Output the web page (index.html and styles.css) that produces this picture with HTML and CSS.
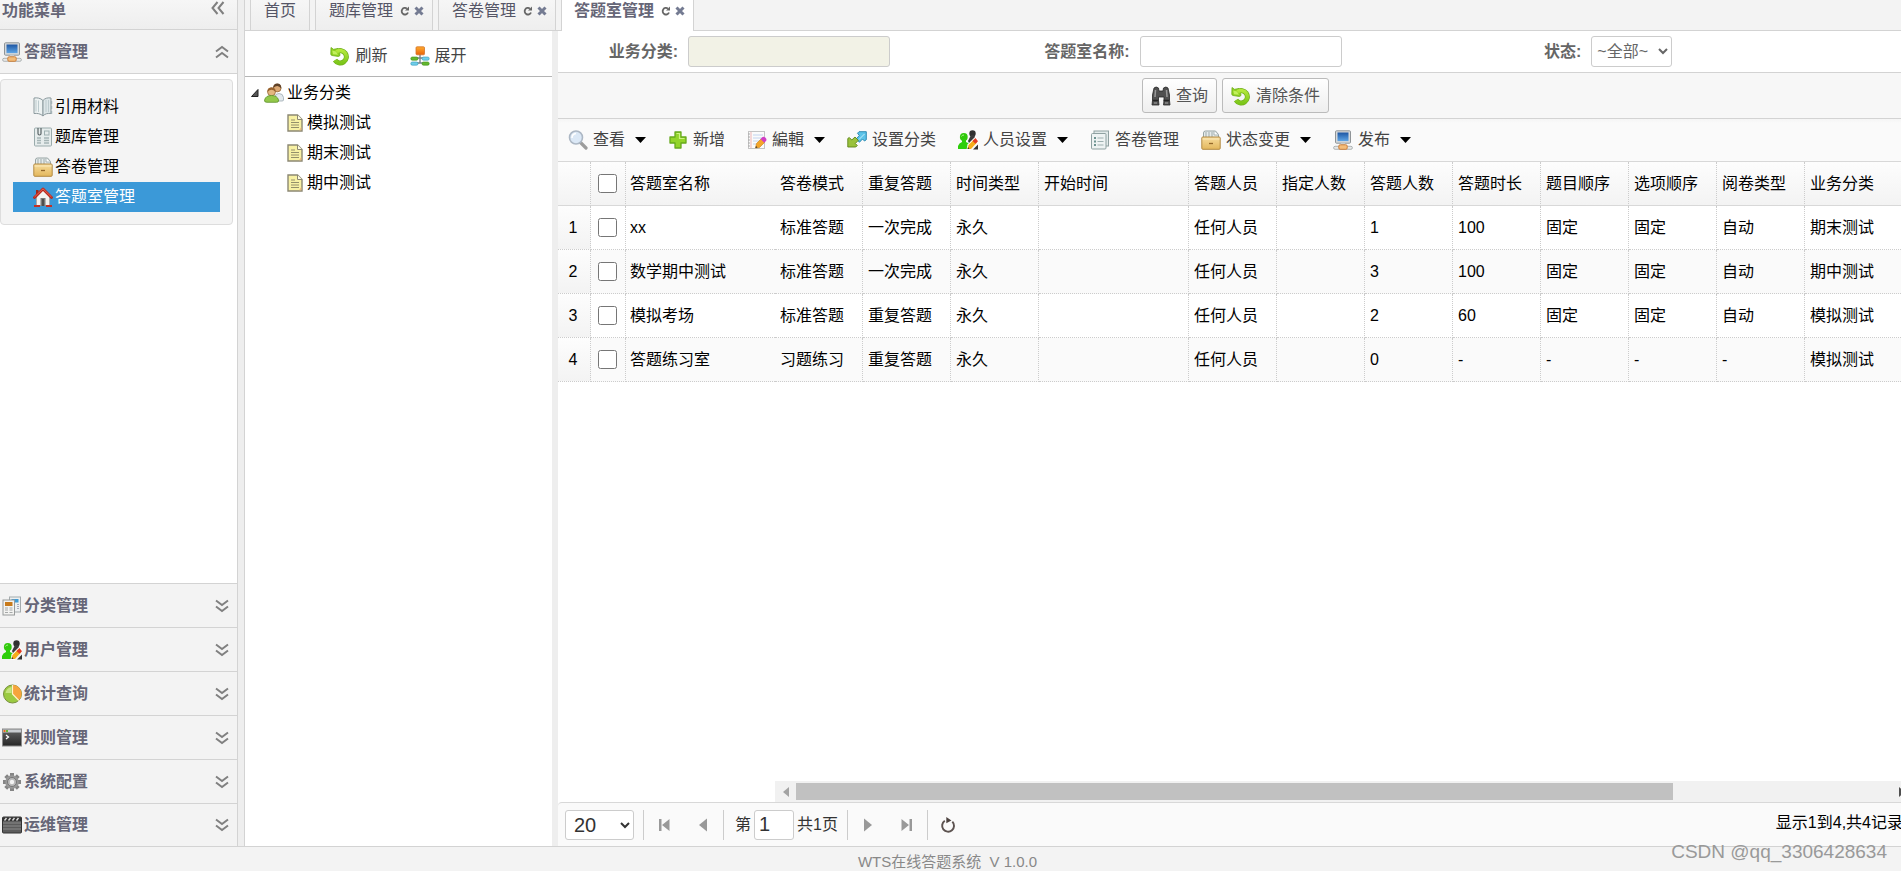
FILE: index.html
```html
<!DOCTYPE html>
<html lang="zh-CN">
<head>
<meta charset="utf-8">
<title>WTS在线答题系统</title>
<link rel="stylesheet" href="styles.css">
</head>
<body>
<svg class="defs" aria-hidden="true">
  <defs>
    <linearGradient id="g-screen" x1="0" y1="0" x2="0" y2="1"><stop offset="0" stop-color="#1d56a3"/><stop offset="1" stop-color="#5fa6e6"/></linearGradient>
    <linearGradient id="g-green" x1="0" y1="0" x2="0" y2="1"><stop offset="0" stop-color="#b4e83c"/><stop offset="1" stop-color="#7cc61a"/></linearGradient>
    <linearGradient id="g-drawer" x1="0" y1="0" x2="0" y2="1"><stop offset="0" stop-color="#f7dc9c"/><stop offset="1" stop-color="#e3b75c"/></linearGradient>
    <linearGradient id="g-orange" x1="0" y1="0" x2="0" y2="1"><stop offset="0" stop-color="#ffab2e"/><stop offset="1" stop-color="#e8620a"/></linearGradient>
    <linearGradient id="g-term" x1="0" y1="0" x2="0" y2="1"><stop offset="0" stop-color="#666"/><stop offset="1" stop-color="#262626"/></linearGradient>
    <symbol id="i-pc" viewBox="0 0 20 20">
      <rect x="2.5" y=".8" width="15" height="12.4" rx="1" fill="#d6d9db" stroke="#8f9497"/>
      <rect x="4.5" y="2.5" width="11" height="8.6" fill="url(#g-screen)"/>
      <path d="M8 13h4v4H8z" fill="#c9cccd"/>
      <rect x=".6" y="16.3" width="18.8" height="3" rx="1.5" fill="#e7e9e9" stroke="#9fa5a6" stroke-width=".8"/>
      <rect x="5.8" y="14.8" width="8.4" height="4.5" rx="1.3" fill="#f3bd7a" stroke="#c97a35" stroke-width=".9"/>
    </symbol>
    <symbol id="i-book" viewBox="0 0 20 20">
      <path d="M10 3.500C7.500 1 4 .5 1 1v15.500c3-.3 6.500 0 9 2.500z" fill="#edf2f2" stroke="#8b999d"/>
      <path d="M10 3.500C12 1 15 .5 18 1v15.500c-3-.3-6 0-8 2.500z" fill="#dde6e8" stroke="#8b999d"/>
      <path d="M3 3v11.500M5.500 3.500V15M13 3v12M15.500 3v12" stroke="#bccacd"/>
      <path d="M18.500 4v3M18.500 9v3M18.500 14v3" stroke="#a5b4b8" stroke-width="1.400"/>
    </symbol>
    <symbol id="i-bank" viewBox="0 0 20 20">
      <rect x="1.500" y="1" width="17" height="18" rx="1" fill="#e6ecec" stroke="#9aabac"/>
      <path d="M5 1v5.500q0 1.500 1.500 1.500T8 6.500V1" fill="none" stroke="#596365" stroke-width="1.200"/>
      <rect x="11.500" y="4" width="4.500" height="4" fill="none" stroke="#9eafb0"/>
      <path d="M4 11h4M4 13.500h4M4 16h4M11 11h5M11 13.500h5M11 16h5" stroke="#a5b4b5" stroke-width="1.300"/>
    </symbol>
    <symbol id="i-drawer" viewBox="0 0 20 20">
      <path d="M2.500 9V3q0-2 2-2h10l3 3.500V9z" fill="#e5ebeb" stroke="#97a4a4"/>
      <path d="M5 2v6M8 2v6M11 2v6" stroke="#9fabab"/>
      <path d="M13 1.500V5h4" fill="#fff" stroke="#97a4a4" stroke-width=".8"/>
      <rect x=".8" y="7" width="18.400" height="12.300" rx="1" fill="url(#g-drawer)" stroke="#b38a43"/>
      <path d="M1.500 9h17" stroke="#fbeabc"/>
      <path d="M8 13.500h4" stroke="#93682a" stroke-width="1.300"/>
    </symbol>
    <symbol id="i-home" viewBox="0 0 20 20">
      <path d="M3.500 9v9.500h13V9L10 3z" fill="#f3f3f0" stroke="#aaa"/>
      <path d="M3 3h2.500v4H3z" fill="#9d2a1d"/>
      <path d="M1.500 10.500L10 2l8.500 8.500" fill="none" stroke="#b8271a" stroke-width="2.800" stroke-linecap="round" stroke-linejoin="round"/>
      <path d="M1.500 10L10 1.800l8.500 8.200" fill="none" stroke="#e8695a" stroke-width="1"/>
      <path d="M7.500 11h5v8h-5z" fill="#7a7a78"/><path d="M9 12h2v7H9z" fill="#4f4f4d"/>
      <path d="M1 19h6M13 19h6" stroke="#c43023" stroke-width="2"/>
    </symbol>
    <symbol id="i-news" viewBox="0 0 20 20">
      <rect x="7.500" y="1" width="11" height="15" fill="#edf0f1" stroke="#a4abad"/>
      <rect x="9.500" y="3" width="7" height="3.500" fill="#3f9bd6"/>
      <path d="M15 8.500h2M15 10.500h2M15 12.500h2" stroke="#aab"/>
      <rect x="1" y="4" width="11.500" height="15" fill="#f3f3f1" stroke="#989b9b"/>
      <rect x="3" y="6" width="7.500" height="4" fill="#c87a1b"/>
      <path d="M3 12h3M7.500 12h3M3 14h3M7.500 14h3M3 16.500h3M7.500 16.500h3" stroke="#a5a8a8"/>
    </symbol>
    <symbol id="i-users" viewBox="0 0 20 20">
      <circle cx="14.500" cy="3.500" r="3.200" fill="#303030"/>
      <path d="M13 5h3l2 4-6 6-2-4z" fill="#3a3a3a"/>
      <circle cx="5.800" cy="7" r="3.900" fill="#30c90b"/>
      <path d="M0 19v-3q1-3 4-4V9h4v3q3 1 4 3l-2 4z" fill="#2fce0c"/>
      <path d="M3.500 6.500q.5-1.500 2.500-1.500" stroke="#a8f28c" fill="none"/>
      <path d="M8.500 20l1-5.500L17.500 6.500l3.500 4L12.500 20z" fill="#fff"/>
      <path d="M9.500 19l1-4 5.500-5.500 3 3L13 19z" fill="#f6ad1b"/>
      <path d="M14.500 11L17.500 8l2.500 3.200-2.500 2.500z" fill="#e33b26"/>
      <path d="M9.500 19l.5-2 1.500 1.800z" fill="#333"/>
      <path d="M15 19.500l5-5v5z" fill="#333"/>
    </symbol>
    <symbol id="i-pie" viewBox="0 0 20 20">
      <circle cx="10.500" cy="10" r="9" fill="#9bca42" stroke="#788f3d"/>
      <path d="M10.500 10V1A9 9 0 0 1 16.800 16.500z" fill="#f6a43c"/>
      <path d="M10.500 1v9l6.300 6.500" stroke="#fff3c7" fill="none" stroke-width="1.200"/>
      <path d="M3.500 9q1-5 6-6v6z" fill="#d0e88e" opacity=".8"/>
    </symbol>
    <symbol id="i-term" viewBox="0 0 20 20">
      <rect x=".5" y="1" width="19" height="17" fill="url(#g-term)" stroke="#8a8a8a"/>
      <path d="M1 1.500h18v3H1z" fill="#c9ccd0"/>
      <path d="M1.500 3h2" stroke="#ed6a1d" stroke-width="2"/><path d="M4 3h2" stroke="#63b635" stroke-width="2"/>
      <path d="M4 7l2.500 2L4 11" stroke="#fff" stroke-width="1.300" fill="none"/>
    </symbol>
    <symbol id="i-gear" viewBox="0 0 20 20">
      <g stroke="#858585" stroke-width="4"><path d="M10 1v18M1 10h18M3.700 3.700l12.600 12.600M16.300 3.700L3.700 16.300"/></g>
      <circle cx="10" cy="10" r="6.800" fill="#989898"/><circle cx="10" cy="10" r="4.500" fill="#b9b9b9" stroke="#777"/>
      <circle cx="10" cy="10" r="2.200" fill="#f3f3f3"/>
    </symbol>
    <symbol id="i-film" viewBox="0 0 20 20">
      <rect x=".5" y="2" width="19" height="16" rx="1" fill="#5c5c5c" stroke="#333"/>
      <path d="M1 2.500h18v3.500H1z" fill="#333"/>
      <path d="M2.500 5.500l2-2.500M6.500 5.500l2-2.500M10.500 5.500l2-2.500M14.500 5.500l2-2.500" stroke="#ddd" stroke-width="1.400"/>
      <path d="M1 8h18M1 11h18M1 14h18" stroke="#8a8a8a"/>
    </symbol>
    <symbol id="i-refresh" viewBox="0 0 20 20">
      <path d="M6.500 5.800A6.200 6.200 0 1 1 5 14.200" fill="none" stroke="#6fae1c" stroke-width="5"/>
      <path d="M1 1.500l2.500 1.800L8 2.500l1.500 3L10 9.500l-1.500 1L2 9.500Q.8 9.300.8 8z" fill="#8fd020" stroke="#6fae1c" stroke-width=".8"/>
      <path d="M6.500 5.800A6.200 6.200 0 1 1 5 14.200" fill="none" stroke="url(#g-green)" stroke-width="3.600"/>
      <path d="M2.200 4.500L3 8.300l5 .5L6 5.500z" fill="#c2f05c"/>
    </symbol>
    <symbol id="i-tree" viewBox="0 0 20 20">
      <path d="M10 8v9M5 12h10M5 17h10" stroke="#77838b" stroke-width="1.400" fill="none"/>
      <rect x="6" y=".8" width="8.500" height="8" rx="1" fill="url(#g-orange)" stroke="#d3742a" stroke-width=".8"/>
      <rect x=".8" y="11" width="7.200" height="3.200" rx="1.500" fill="#64b72e" stroke="#3d8d18" stroke-width=".6"/>
      <rect x="12" y="11" width="7.200" height="3.200" rx="1.500" fill="#70ceea" stroke="#3198bb" stroke-width=".6"/>
      <rect x=".8" y="16" width="7.200" height="3.200" rx="1.500" fill="#70ceea" stroke="#3198bb" stroke-width=".6"/>
      <rect x="12" y="16" width="7.200" height="3.200" rx="1.500" fill="#64b72e" stroke="#3d8d18" stroke-width=".6"/>
    </symbol>
    <symbol id="i-people" viewBox="0 0 20 20">
      <path d="M11 18v-4q0-3.500 4-3.500t4.500 4V17q0 1-1.500 1z" fill="#e2e8ec" stroke="#a0abb2" stroke-width=".8"/>
      <circle cx="13.200" cy="5" r="3.900" fill="#dba874" stroke="#8b5b2e" stroke-width=".7"/>
      <path d="M9.300 5q0-4.500 4-4.500t4 5q-2-2.500-4-2.500T9.300 5z" fill="#5f4128"/>
      <circle cx="7.500" cy="8.800" r="4" fill="#e3b67f" stroke="#8b5b2e" stroke-width=".7"/>
      <path d="M3.500 9q0-4.500 4-4.500t4 4.500q-2-2.300-4-2.300T3.500 9z" fill="#96602c"/>
      <path d="M.6 18v-1q1-4.500 6.900-4.500t7 4.500v1q0 1.300-2 1.300H3q-2.400 0-2.400-1.300z" fill="#93c84a" stroke="#5d902a" stroke-width=".8"/>
    </symbol>
    <symbol id="i-page" viewBox="0 0 16 18">
      <path d="M1 1h9.500L15 5.500V17H1z" fill="#f8f1a4" stroke="#8c8873" stroke-width="1.400"/>
      <path d="M10.500 1v4.500H15" fill="#fffde0" stroke="#8c8873"/>
      <path d="M4 6h4M4 8.500h8M4 11h8M4 13.500h8" stroke="#95906a" stroke-width="1.200"/>
      <path d="M12 16.300h2.300V13z" fill="#efb97b"/>
    </symbol>
    <symbol id="i-search" viewBox="0 0 20 20">
      <path d="M12.500 12.500L18 18" stroke="#9c9c9c" stroke-width="3.200" stroke-linecap="round"/>
      <circle cx="8" cy="7.500" r="6.500" fill="#dbe8f6" stroke="#acb7c4" stroke-width="1.600"/>
      <path d="M4 8q0-4 4-4.500" stroke="#fff" fill="none" stroke-width="1.500"/>
    </symbol>
    <symbol id="i-plus" viewBox="0 0 20 20">
      <path d="M7 2h6v5h5v6h-5v5H7v-5H2V7h5z" fill="#92d42a" stroke="#66a91c" stroke-width="1.300" stroke-linejoin="round"/>
      <path d="M8.500 3.500h3v5h5" fill="none" stroke="#cdf283" stroke-width="1.200"/>
    </symbol>
    <symbol id="i-edit" viewBox="0 0 20 20">
      <rect x="1.500" y="1.500" width="16" height="17" fill="#fbfbfb" stroke="#c4c4c4"/>
      <path d="M4 2v16" stroke="#edb5b5"/><path d="M1 4h2M1 7h2M1 10h2M1 13h2M1 16h2" stroke="#aaa"/>
      <path d="M6 5h10M6 8h10M6 11h8M6 14h3" stroke="#c3d4ef"/>
      <path d="M8.500 18l1-4.500 4.500-4.500 3.500 3.500-5 5z" fill="#f4a52a" stroke="#c57d16" stroke-width=".6"/>
      <path d="M13.500 9l2-2q1.500-.5 3 .8t.7 2.900L17.300 12.700z" fill="#d13ec5"/>
      <path d="M8.500 18l.5-2 1.500 1.500z" fill="#333"/>
    </symbol>
    <symbol id="i-link" viewBox="0 0 20 20">
      <path d="M10.500 3.200l1.500-1.500h7.300v8L17.500 11 15.500 9l-3 3.200L9 9l3.300-3.400z" fill="#5cc3e8" stroke="#2382ab" stroke-width=".9"/>
      <path d="M.8 8.500L2.300 7.500 4.800 10 8 7l3.300 3.300L8.300 13.500l2 2-1.500 1.500H.8z" fill="#9ac23c" stroke="#5d8518" stroke-width=".9"/>
      <path d="M12 9.500l5.500-5.500" stroke="#c4eefc"/>
    </symbol>
    <symbol id="i-notes" viewBox="0 0 20 20">
      <rect x="4" y="1" width="14.500" height="15" fill="#e2eaea" stroke="#8fa1a1"/>
      <rect x="1.500" y="3.500" width="14.500" height="15.500" rx="1" fill="#eef3f3" stroke="#8fa1a1"/>
      <path d="M4 8h2M4 11.500h2M4 15h2" stroke="#6d9391" stroke-width="1.800"/>
      <path d="M7.500 8h6M7.500 11.500h6M7.500 15h6" stroke="#9db0b0" stroke-width="1.200"/>
    </symbol>
    <symbol id="i-bino" viewBox="0 0 20 20">
      <path d="M3 2q2-2 4.500 0L8 5h4l.5-3q2.500-2 4.500 0l1.500 7v5.500l.5 4.500h-6.500l.5-4.500V11H7.500v3.500L8 19H1l.5-4.500V9z" fill="#505050" stroke="#272727" stroke-width=".8"/>
      <path d="M4.500 4L4 11M15.500 4l.5 7" stroke="#999" stroke-width="1.500"/>
      <path d="M1.500 14.500h6M12.500 14.500h6" stroke="#222" stroke-width="1.500"/><path d="M3 17h3M14 17h3" stroke="#888" stroke-width="1.500"/>
    </symbol>
    <symbol id="i-down" viewBox="0 0 14 14"><path d="M1 1.500l6 4.500 6-4.500M1 7.500l6 4.500 6-4.500" fill="none" stroke="#808080" stroke-width="2"/></symbol>
    <symbol id="i-up" viewBox="0 0 14 14"><path d="M1 6.500l6-4.500 6 4.500M1 12.500l6-4.500 6 4.500" fill="none" stroke="#808080" stroke-width="2"/></symbol>
    <symbol id="i-left" viewBox="0 0 14 14"><path d="M6.500 1l-5 6 5 6M12.500 1l-5 6 5 6" fill="none" stroke="#808080" stroke-width="2"/></symbol>
    <symbol id="i-reload" viewBox="0 0 10 10"><path d="M7 2.600A3.300 3.300 0 1 0 8 6.500" fill="none" stroke="#666" stroke-width="1.800"/><path d="M5 4.500h4V.5z" fill="#666"/></symbol>
    <symbol id="i-close" viewBox="0 0 10 10"><path d="M1.500 1.500l7 7M8.500 1.500l-7 7" stroke="#747b92" stroke-width="3"/></symbol>
    <symbol id="i-caret" viewBox="0 0 11 6"><path d="M0 0h11L5.500 6z" fill="#000"/></symbol>
    <symbol id="i-branch" viewBox="0 0 10 10"><path d="M1.500 8.500h6.500V1.500z" fill="#555" stroke="#222"/></symbol>
    <symbol id="i-first" viewBox="0 0 12 14"><path d="M1 1h2.500v12H1zM11.500 1v12L4 7z" fill="#999"/></symbol>
    <symbol id="i-prev" viewBox="0 0 12 14"><path d="M10 .5v13L2 7z" fill="#999"/></symbol>
    <symbol id="i-next" viewBox="0 0 12 14"><path d="M2 .5v13L10 7z" fill="#999"/></symbol>
    <symbol id="i-last" viewBox="0 0 12 14"><path d="M.5 1v12L8 7zM8.500 1H11v12H8.500z" fill="#999"/></symbol>
    <symbol id="i-load" viewBox="0 0 14 14"><path d="M4.200 3.300A5.200 5.200 0 1 0 10.800 4" fill="none" stroke="#5d5350" stroke-width="1.700"/><path d="M5.500 0v5.500L10 3z" fill="#4d4340"/></symbol>
    <symbol id="i-sleft" viewBox="0 0 6 10"><path d="M6 0v10L0 5z" fill="#a3a3a3"/></symbol>
    <symbol id="i-sright" viewBox="0 0 6 10"><path d="M0 0v10l6-5z" fill="#505050"/></symbol>
  </defs>
</svg>

<div class="app">
  <div class="main">
    <aside class="sidebar">
      <header class="side-title"><span>功能菜单</span><button class="chev" aria-label="收起"><svg><use href="#i-left"/></svg></button></header>
      <button class="acc acc-open"><svg class="icon"><use href="#i-pc"/></svg><span>答题管理</span><svg class="acc-arrow"><use href="#i-up"/></svg></button>
      <div class="acc-body">
        <nav class="submenu">
          <a href="#"><svg class="icon"><use href="#i-book"/></svg>引用材料</a>
          <a href="#"><svg class="icon"><use href="#i-bank"/></svg>题库管理</a>
          <a href="#"><svg class="icon"><use href="#i-drawer"/></svg>答卷管理</a>
          <a href="#" class="selected"><svg class="icon"><use href="#i-home"/></svg>答题室管理</a>
        </nav>
      </div>
      <button class="acc"><svg class="icon"><use href="#i-news"/></svg><span>分类管理</span><svg class="acc-arrow"><use href="#i-down"/></svg></button>
      <button class="acc"><svg class="icon"><use href="#i-users"/></svg><span>用户管理</span><svg class="acc-arrow"><use href="#i-down"/></svg></button>
      <button class="acc"><svg class="icon"><use href="#i-pie"/></svg><span>统计查询</span><svg class="acc-arrow"><use href="#i-down"/></svg></button>
      <button class="acc"><svg class="icon"><use href="#i-term"/></svg><span>规则管理</span><svg class="acc-arrow"><use href="#i-down"/></svg></button>
      <button class="acc"><svg class="icon"><use href="#i-gear"/></svg><span>系统配置</span><svg class="acc-arrow"><use href="#i-down"/></svg></button>
      <button class="acc"><svg class="icon"><use href="#i-film"/></svg><span>运维管理</span><svg class="acc-arrow"><use href="#i-down"/></svg></button>
    </aside>

    <section class="workspace">
      <div class="tabs">
        <div class="tab">首页</div>
        <div class="tab">题库管理<svg class="mini first-mini"><use href="#i-reload"/></svg><svg class="mini"><use href="#i-close"/></svg></div>
        <div class="tab">答卷管理<svg class="mini first-mini"><use href="#i-reload"/></svg><svg class="mini"><use href="#i-close"/></svg></div>
        <div class="tab active">答题室管理<svg class="mini first-mini"><use href="#i-reload"/></svg><svg class="mini"><use href="#i-close"/></svg></div>
      </div>
      <div class="panes">
        <div class="tree-pane">
          <div class="tree-tools">
            <button class="tool"><svg class="icon"><use href="#i-refresh"/></svg>刷新</button>
            <button class="tool"><svg class="icon"><use href="#i-tree"/></svg>展开</button>
          </div>
          <ul class="tree">
            <li><svg class="branch"><use href="#i-branch"/></svg><svg class="icon"><use href="#i-people"/></svg>业务分类</li>
            <li class="leaf"><svg class="page"><use href="#i-page"/></svg>模拟测试</li>
            <li class="leaf"><svg class="page"><use href="#i-page"/></svg>期末测试</li>
            <li class="leaf"><svg class="page"><use href="#i-page"/></svg>期中测试</li>
          </ul>
        </div>
        <div class="grid-pane">
          <form class="filters">
            <label for="f-cat">业务分类:</label><div><input id="f-cat" class="field readonly" readonly></div>
            <label for="f-name">答题室名称:</label><div><input id="f-name" class="field"></div>
            <label for="f-state">状态:</label><div><select id="f-state" class="state"><option>~全部~</option></select></div>
          </form>
          <div class="actions">
            <button class="btn"><svg class="icon"><use href="#i-bino"/></svg>查询</button>
            <button class="btn"><svg class="icon"><use href="#i-refresh"/></svg>清除条件</button>
          </div>
          <div class="toolbar">
            <button class="tool"><svg class="icon"><use href="#i-search"/></svg>查看<svg class="caret"><use href="#i-caret"/></svg></button>
            <button class="tool"><svg class="icon"><use href="#i-plus"/></svg>新增</button>
            <button class="tool"><svg class="icon"><use href="#i-edit"/></svg>編輯<svg class="caret"><use href="#i-caret"/></svg></button>
            <button class="tool"><svg class="icon"><use href="#i-link"/></svg>设置分类</button>
            <button class="tool"><svg class="icon"><use href="#i-users"/></svg>人员设置<svg class="caret"><use href="#i-caret"/></svg></button>
            <button class="tool"><svg class="icon"><use href="#i-notes"/></svg>答卷管理</button>
            <button class="tool"><svg class="icon"><use href="#i-drawer"/></svg>状态变更<svg class="caret"><use href="#i-caret"/></svg></button>
            <button class="tool"><svg class="icon"><use href="#i-pc"/></svg>发布<svg class="caret"><use href="#i-caret"/></svg></button>
          </div>
          <div class="table-wrap">
            <table class="grid">
              <colgroup><col class="c-num"><col class="c-check"><col class="c-name"><col class="c-std"><col class="c-std"><col class="c-std"><col class="c-time"><col class="c-std"><col class="c-std"><col class="c-std"><col class="c-std"><col class="c-std"><col class="c-std"><col class="c-std"><col></colgroup>
              <thead>
                <tr><th></th><th class="check"><input type="checkbox" aria-label="全选"></th><th class="name">答题室名称</th><th>答卷模式</th><th>重复答题</th><th>时间类型</th><th>开始时间</th><th>答题人员</th><th>指定人数</th><th>答题人数</th><th>答题时长</th><th>题目顺序</th><th>选项顺序</th><th>阅卷类型</th><th>业务分类</th></tr>
              </thead>
              <tbody>
                <tr><td class="num">1</td><td class="check"><input type="checkbox" aria-label="选择 xx"></td><td class="name">xx</td><td>标准答题</td><td>一次完成</td><td>永久</td><td></td><td>任何人员</td><td></td><td>1</td><td>100</td><td>固定</td><td>固定</td><td>自动</td><td>期末测试</td></tr>
                <tr><td class="num">2</td><td class="check"><input type="checkbox" aria-label="选择 数学期中测试"></td><td class="name">数学期中测试</td><td>标准答题</td><td>一次完成</td><td>永久</td><td></td><td>任何人员</td><td></td><td>3</td><td>100</td><td>固定</td><td>固定</td><td>自动</td><td>期中测试</td></tr>
                <tr><td class="num">3</td><td class="check"><input type="checkbox" aria-label="选择 模拟考场"></td><td class="name">模拟考场</td><td>标准答题</td><td>重复答题</td><td>永久</td><td></td><td>任何人员</td><td></td><td>2</td><td>60</td><td>固定</td><td>固定</td><td>自动</td><td>模拟测试</td></tr>
                <tr><td class="num">4</td><td class="check"><input type="checkbox" aria-label="选择 答题练习室"></td><td class="name">答题练习室</td><td>习题练习</td><td>重复答题</td><td>永久</td><td></td><td>任何人员</td><td></td><td>0</td><td>-</td><td>-</td><td>-</td><td>-</td><td>模拟测试</td></tr>
              </tbody>
            </table>
          </div>
          <div class="hscroll"><svg class="sarrow"><use href="#i-sleft"/></svg><div class="track"><div class="thumb"></div></div><svg class="sarrow"><use href="#i-sright"/></svg></div>
          <div class="pager">
            <select class="size" aria-label="每页条数"><option>20</option></select>
            <span class="sep"></span>
            <span class="pg-pair">
              <button class="pg" aria-label="首页"><svg><use href="#i-first"/></svg></button>
              <button class="pg" aria-label="上一页"><svg><use href="#i-prev"/></svg></button>
            </span>
            <span class="sep"></span>
            <label class="pg-label" for="pg-no">第</label><input id="pg-no" class="pg-no" value="1"><span class="pg-total">共1页</span>
            <span class="sep"></span>
            <span class="pg-pair">
              <button class="pg" aria-label="下一页"><svg><use href="#i-next"/></svg></button>
              <button class="pg" aria-label="末页"><svg><use href="#i-last"/></svg></button>
            </span>
            <span class="sep"></span>
            <button class="pg" aria-label="刷新"><svg class="load"><use href="#i-load"/></svg></button>
            <span class="info">显示1到4,共4记录</span>
          </div>
        </div>
      </div>
    </section>
  </div>
  <footer class="footer">WTS在线答题系统&nbsp; V 1.0.0</footer>
</div>
<div class="watermark">CSDN @qq_3306428634</div>
</body>
</html>
```

FILE: styles.css
```css
* { box-sizing: border-box; }

body {
  margin: 0;
  overflow: hidden;
  background: #f3f3f3;
  color: #000;
  font: 16px/24px "Liberation Sans", "Noto Sans CJK SC", sans-serif;
}

button, input, select { font: inherit; color: inherit; }
button { border: 0; padding: 0; background: none; }
svg { display: block; flex: none; }

.defs { position: absolute; width: 0; height: 0; }
.icon { width: 20px; height: 20px; }

.app { display: flex; flex-direction: column; height: 100vh; }
.main { flex: 1; display: flex; gap: 6px; min-height: 0; background: #eee; border-bottom: 1px solid #d3d3d3; }

/* sidebar */
.sidebar {
  flex: none;
  width: 238px;
  display: flex;
  flex-direction: column;
  border-right: 1px solid #d3d3d3;
  background: #fff;
  color: #667;
  font-weight: 700;
}
.side-title {
  display: flex;
  align-items: flex-start;
  justify-content: space-between;
  height: 30px;
  padding: 0 12px 0 2px;
  line-height: 22px;
  border-bottom: 1px solid #d3d3d3;
  background: linear-gradient(#f6f6f6, #eee);
}
.chev { padding-top: 1px; }
.chev svg, .acc-arrow { width: 14px; height: 14px; }
.acc {
  flex: none;
  display: flex;
  align-items: center;
  gap: 2px;
  height: 44px;
  padding: 0 8px 0 2px;
  border-top: 1px solid #d3d3d3;
  background: #f3f3f3;
  text-align: left;
}
.acc span { flex: 1; }
.acc:last-child { height: 43px; }
.acc-open { border-top: 0; border-bottom: 1px solid #d3d3d3; }
.acc-body { flex: 1; padding: 5px 4px 0 0; }
.submenu {
  padding: 12px;
  border: 1px solid #ddd;
  border-radius: 4px;
  background: #f4f4f4;
  font-weight: 400;
}
.submenu a {
  display: flex;
  align-items: center;
  gap: 2px;
  height: 30px;
  padding-left: 20px;
  color: #000;
  text-decoration: none;
}
.submenu .selected { background: #3b99d8; color: #fff; }

/* the workspace runs a little past the right edge of the window */
.workspace {
  flex: 1;
  min-width: 0;
  margin-right: -12px;
  display: flex;
  flex-direction: column;
  border-left: 1px solid #d3d3d3;
  background: #eee;
}
.tabs {
  flex: none;
  display: flex;
  gap: 5px;
  height: 31px;
  padding-left: 5px;
  border-bottom: 1px solid #d3d3d3;
  background: #f3f3f3;
  color: #556;
}
.tab {
  display: flex;
  align-items: center;
  height: 30px;
  padding: 0 13px 8px;
  border: solid #d3d3d3;
  border-width: 0 1px;
  background: linear-gradient(#f6f6f6, #eee);
}
.tab.active { height: 31px; padding: 0 12px 9px; background: #fff; color: #667; font-weight: 700; }
.mini { width: 10px; height: 10px; margin-left: 4px; }
.first-mini { margin-left: 7px; }
.tab:has(.mini) { padding-right: 8px; }

.panes { flex: 1; display: flex; gap: 6px; min-height: 0; }
.tree-pane { flex: none; width: 307px; background: #fff; }
.tree-tools {
  display: flex;
  justify-content: center;
  gap: 22px;
  height: 46px;
  padding-top: 4px;
  border-bottom: 1px solid #b5b5b5;
}
.tool { display: flex; align-items: center; gap: 5px; color: #444; }
.tree { margin: 0; padding: 1px 0 0; list-style: none; }
.tree li { display: flex; align-items: center; gap: 3px; height: 30px; padding-left: 5px; }
.branch { width: 10px; height: 10px; margin-right: 1px; }
.tree .leaf { padding-left: 42px; gap: 4px; }
.page { width: 16px; height: 18px; }

/* grid pane */
.grid-pane { flex: 1; min-width: 0; display: flex; flex-direction: column; background: #fff; }
.filters {
  display: grid;
  grid-template-columns: repeat(3, 120px 1fr);
  align-items: center;
  height: 42px;
  border-bottom: 1px solid #d3d3d3;
  color: #666;
}
.filters label { text-align: right; font-weight: 700; }
.filters div { padding-left: 10px; }
.field, .state {
  display: block;
  height: 31px;
  border: 1px solid #ccc;
  border-radius: 3px;
  background: #fff;
}
.field { width: 202px; padding: 0 4px; }
.field.readonly { background: #f2f2e6; }
.state { width: 81px; padding: 0 1px; }
.actions {
  display: flex;
  justify-content: center;
  align-items: center;
  gap: 5px;
  height: 46px;
  border-bottom: 1px solid #d3d3d3;
  background: #f7f7f7;
}
.btn {
  display: flex;
  align-items: center;
  gap: 5px;
  height: 35px;
  padding: 0 8px;
  border: 1px solid #bbb;
  border-radius: 3px;
  background: linear-gradient(#fff, #eee);
  color: #555;
}
.toolbar {
  display: flex;
  gap: 22px;
  height: 43px;
  padding: 0 10px;
  border-bottom: 1px solid #d8d8d8;
  background: linear-gradient(#f5f5f5, #fafafa 4px);
}
.caret { width: 11px; height: 6px; margin-left: 5px; }

.table-wrap { flex: 1; min-height: 0; overflow: hidden; }
.grid { width: 100%; table-layout: fixed; border-collapse: separate; border-spacing: 0; }
.c-num { width: 33px; }
.c-check { width: 35px; }
.c-name { width: 149px; }
.c-std { width: 88px; }
.c-time { width: 150px; }
.grid th, .grid td {
  height: 44px;
  padding: 0 4px 0 5px;
  border-right: 1px dotted #ccc;
  border-bottom: 1px dotted #ccc;
  font-weight: 400;
  text-align: left;
  white-space: nowrap;
}
.grid th { border-bottom: 1px solid #d8d8d8; background: linear-gradient(#fdfdfd, #f3f3f3); }
.grid .name { border-right: 0; padding-left: 4px; }
.grid .num { background: linear-gradient(to bottom, #fdfdfd, #f3f3f3); text-align: center; padding: 0 6px 0 4px; }
.grid .check { padding: 0 7px; }
.check input { display: block; width: 19px; height: 19px; margin: 0; }
.grid tbody tr:nth-child(even) { background: #fafafa; }

.hscroll {
  flex: none;
  display: flex;
  align-items: center;
  height: 21px;
  margin-left: 217px;
  padding: 0 8px;
  background: #f1f1f1;
}
.sarrow { width: 6px; height: 10px; }
.track { flex: 1; padding: 0 7px; }
.thumb { width: 80%; height: 17px; background: #c1c1c1; }

.pager {
  flex: none;
  display: flex;
  align-items: center;
  height: 44px;
  padding: 0 10px 0 7px;
  border-top: 1px solid #d8d8d8;
  border-top-left-radius: 4px;
  background: #fafafa;
}
.size, .pg-no { height: 30px; border: 1px solid #ccc; border-radius: 3px; background: #fff; font-size: 20px; color: #333; }
.size { width: 69px; padding: 0 4px; }
.sep { width: 1px; height: 30px; margin: 0 9px; background: #ccc; }
.pg-pair { display: flex; gap: 17px; }
.pg { display: flex; justify-content: center; width: 22px; }
.pg svg { width: 12px; height: 14px; }
.pg .load { width: 16px; height: 16px; }
.pg-label { margin-right: 3px; padding-left: 2px; }
.pg-no { width: 40px; padding: 0 4px; }
.pg-total { padding-left: 3px; }
.pg-label, .pg-total { color: #333; }
.info { margin-left: auto; padding-bottom: 4px; }

.footer { flex: none; height: 24px; padding: 3px 6px 0 0; text-align: center; font-size: 15px; color: #888; }

.watermark {
  position: absolute;
  right: 14px;
  bottom: 7px;
  font-size: 19px;
  color: #999;
}
```
